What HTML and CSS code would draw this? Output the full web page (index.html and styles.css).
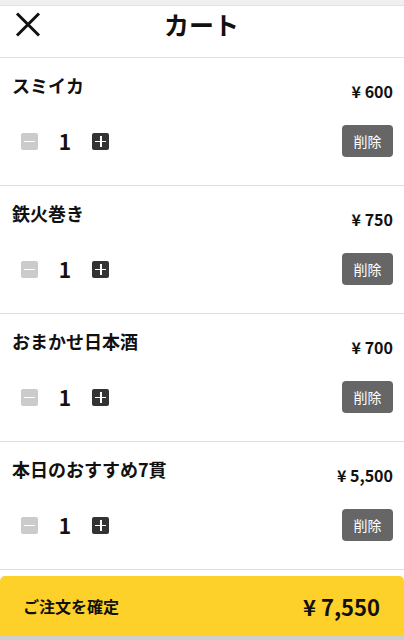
FILE: index.html
```html
<!DOCTYPE html>
<html lang="ja">
<head>
  <meta charset="UTF-8">
  <title>カート</title>
  <link rel="stylesheet" href="styles.css">
</head>
<body>

  <div class="sheet">
    <header class="cart-header">
      <button class="btn-close" aria-label="閉じる">
        <svg width="26" height="25" viewBox="0 0 26 25">
          <path d="M2 1.5 L24 23.5 M24 1.5 L2 23.5" stroke="#111" stroke-width="3" fill="none"/>
        </svg>
      </button>
      <h1>カート</h1>
    </header>

    <ul class="cart-list">
      <li class="cart-item">
        <div class="item-top">
          <span class="item-name">スミイカ</span>
          <span class="item-price">¥ 600</span>
        </div>
        <div class="item-bottom">
          <div class="qty">
            <span class="qty-btn minus"></span>
            <span class="qty-num">1</span>
            <span class="qty-btn plus"></span>
          </div>
          <button class="btn-delete">削除</button>
        </div>
      </li>
      <li class="cart-item">
        <div class="item-top">
          <span class="item-name">鉄火巻き</span>
          <span class="item-price">¥ 750</span>
        </div>
        <div class="item-bottom">
          <div class="qty">
            <span class="qty-btn minus"></span>
            <span class="qty-num">1</span>
            <span class="qty-btn plus"></span>
          </div>
          <button class="btn-delete">削除</button>
        </div>
      </li>
      <li class="cart-item">
        <div class="item-top">
          <span class="item-name">おまかせ日本酒</span>
          <span class="item-price">¥ 700</span>
        </div>
        <div class="item-bottom">
          <div class="qty">
            <span class="qty-btn minus"></span>
            <span class="qty-num">1</span>
            <span class="qty-btn plus"></span>
          </div>
          <button class="btn-delete">削除</button>
        </div>
      </li>
      <li class="cart-item">
        <div class="item-top">
          <span class="item-name">本日のおすすめ7貫</span>
          <span class="item-price">¥ 5,500</span>
        </div>
        <div class="item-bottom">
          <div class="qty">
            <span class="qty-btn minus"></span>
            <span class="qty-num">1</span>
            <span class="qty-btn plus"></span>
          </div>
          <button class="btn-delete">削除</button>
        </div>
      </li>
    </ul>

    <button class="btn-order">
      <span>ご注文を確定</span>
      <span class="order-total">¥ 7,550</span>
    </button>
  </div>

</body>
</html>
```

FILE: styles.css
```css
body {
  margin: 0;
  background-color: #cfcfcf;
  font-family: "Noto Sans CJK JP", "Noto Sans", sans-serif;
  color: #111;
}

.sheet {
  background-color: #fff;
  border-top: 5px solid #f0f0f0;
}

.cart-header {
  display: flex;
  align-items: flex-start;
  height: 53px;
  box-sizing: border-box;
  padding: 6px 16px 0 15px;
  border-top: 1px solid #e2e2e2;
  border-bottom: 1px solid #e2e2e2;
}

.btn-close {
  display: flex;
  padding: 0;
  margin-top: 0;
  border: none;
  background: none;
}

.cart-header h1 {
  flex: 1;
  margin: 0;
  padding-right: 26px;
  text-align: center;
  font-size: 25px;
  line-height: 24px;
  font-weight: bold;
}

.cart-list {
  list-style: none;
  margin: 0;
  padding: 0;
}

.cart-item {
  height: 128px;
  box-sizing: border-box;
  padding: 14px 11px 0 12px;
  border-bottom: 1px solid #dcdcdc;
}

.item-top {
  display: flex;
  justify-content: space-between;
  align-items: flex-start;
  height: 27px;
}

.item-name {
  font-size: 18px;
  line-height: 27px;
  font-weight: bold;
}

.item-price {
  margin-top: 8px;
  font-size: 16px;
  line-height: 22px;
  font-weight: bold;
}

.item-bottom {
  display: flex;
  justify-content: space-between;
  align-items: center;
  margin-top: 26px;
}

.qty {
  display: flex;
  align-items: center;
  margin-left: 9px;
}

.qty-btn {
  position: relative;
  width: 17px;
  height: 17px;
  border-radius: 2px;
}

.qty-btn.minus {
  background-color: #cbcbcb;
}

.qty-btn.plus {
  background-color: #333;
}

.qty-btn::before,
.qty-btn.plus::after {
  content: "";
  position: absolute;
  left: 3px;
  top: 8px;
  width: 11px;
  height: 1.5px;
  background-color: #fff;
}

.qty-btn.plus::after {
  left: 8px;
  top: 3px;
  width: 1.5px;
  height: 11px;
}

.qty-num {
  width: 54px;
  text-align: center;
  font-size: 21px;
  line-height: 24px;
  font-weight: bold;
}

.btn-delete {
  width: 51px;
  height: 32px;
  padding: 0;
  border: none;
  border-radius: 4px;
  background-color: #666;
  color: #fff;
  font-family: inherit;
  font-size: 14px;
}

.btn-order {
  display: flex;
  justify-content: space-between;
  align-items: center;
  width: 100%;
  height: 60px;
  margin-top: 6px;
  padding: 0 24px 0 23px;
  border: none;
  border-radius: 5px 5px 0 0;
  background-color: #fdd02a;
  color: #111;
  font-family: inherit;
  font-size: 16px;
  font-weight: bold;
}

.order-total {
  font-size: 22px;
}
```
